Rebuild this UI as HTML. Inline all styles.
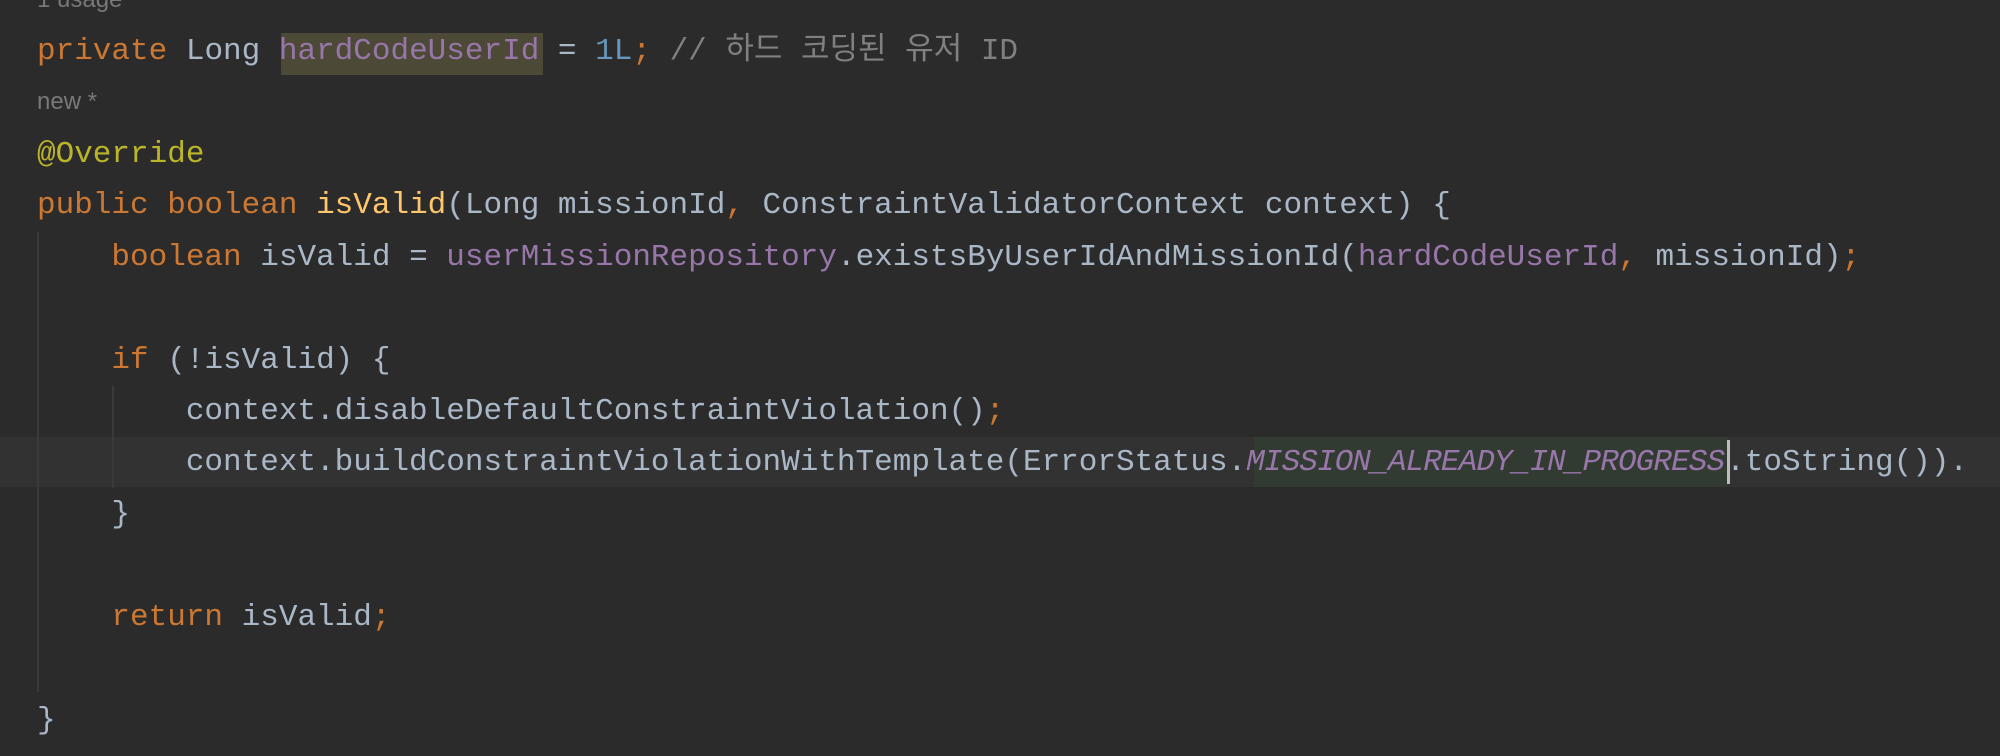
<!DOCTYPE html>
<html><head><meta charset="utf-8"><style>
html,body{margin:0;padding:0;}
body{width:2000px;height:756px;background:#2b2b2b;overflow:hidden;position:relative;font-family:"Liberation Mono","Noto Sans CJK KR",monospace;font-size:31px;color:#a9b7c6;}
.l{position:absolute;left:37px;white-space:pre;height:51px;line-height:51px;}
.k{color:#cc7832}.f{color:#9876aa}.n{color:#6897bb}.y{color:#ffc66d}.a{color:#bbb529}.c{color:#808080}.i{font-style:italic}
.h{position:absolute;color:#787878;font-family:"Liberation Sans",sans-serif;font-size:24px;left:37px;}
.g{position:absolute;width:2px;background:#3a3a3a;}
</style></head><body>
<div style="position:absolute;left:0;top:437px;width:2000px;height:50px;background:#323232"></div>
<div style="position:absolute;left:281px;top:33px;width:262px;height:42px;background:#4c4a37"></div>
<div style="position:absolute;left:1254px;top:437px;width:474px;height:50px;background:#323b31"></div>
<div style="position:absolute;left:1727px;top:440px;width:3px;height:44px;background:#bbbbbb"></div>
<div class="g" style="left:37px;top:232px;height:460px"></div>
<div class="g" style="left:112px;top:386px;height:102px"></div>
<div class="h" style="top:-14px">1 usage</div>
<div class="l" style="top:26px"><span class="k">private</span> Long <span class="f">hardCodeUserId</span> = <span class="n">1L</span><span class="k">;</span> <span class="c">// 하드 코딩된 유저 ID</span></div>
<div class="h" style="top:88px">new *</div>
<div class="l" style="top:129px"><span class="a">@Override</span></div>
<div class="l" style="top:180px"><span class="k">public boolean</span> <span class="y">isValid</span>(Long missionId<span class="k">,</span> ConstraintValidatorContext context) {</div>
<div class="l" style="top:232px">    <span class="k">boolean</span> isValid = <span class="f">userMissionRepository</span>.existsByUserIdAndMissionId(<span class="f">hardCodeUserId</span><span class="k">,</span> missionId)<span class="k">;</span></div>
<div class="l" style="top:335px">    <span class="k">if</span> (!isValid) {</div>
<div class="l" style="top:386px">        context.disableDefaultConstraintViolation()<span class="k">;</span></div>
<div class="l" style="top:437px">        context.buildConstraintViolationWithTemplate(ErrorStatus.<span class="f i" style="letter-spacing:-0.9px">MISSION_ALREADY_IN_PROGRESS</span><span style="margin-left:2px">.toString()).</span></div>
<div class="l" style="top:489px">    }</div>
<div class="l" style="top:592px">    <span class="k">return</span> isValid<span class="k">;</span></div>
<div class="l" style="top:695px">}</div>
</body></html>
